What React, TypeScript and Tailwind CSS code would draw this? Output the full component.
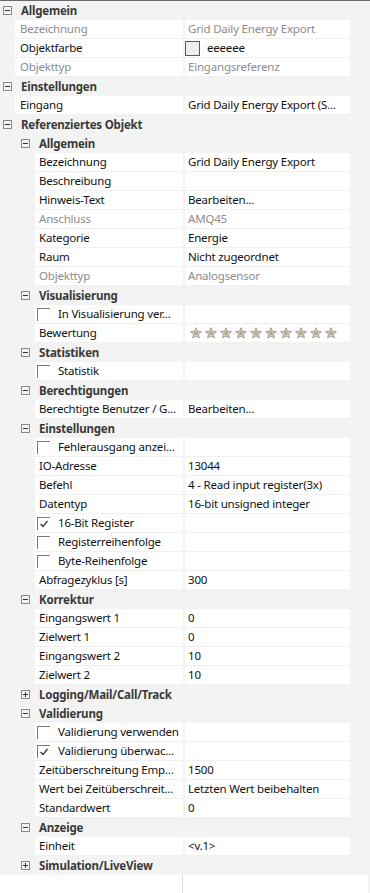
import React from "react";

type Row =
  | { t: "h"; l: 0 | 1; label: string; collapsed?: boolean }
  | { t: "p"; l: 0 | 1; label: string; value?: string; disabled?: boolean; swatch?: boolean; stars?: boolean }
  | { t: "c"; label: string; checked: boolean };

const rows: Row[] = [
  { t: "h", l: 0, label: "Allgemein" },
  { t: "p", l: 0, label: "Bezeichnung", value: "Grid Daily Energy Export", disabled: true },
  { t: "p", l: 0, label: "Objektfarbe", value: "eeeeee", swatch: true },
  { t: "p", l: 0, label: "Objekttyp", value: "Eingangsreferenz", disabled: true },
  { t: "h", l: 0, label: "Einstellungen" },
  { t: "p", l: 0, label: "Eingang", value: "Grid Daily Energy Export (S..." },
  { t: "h", l: 0, label: "Referenziertes Objekt" },
  { t: "h", l: 1, label: "Allgemein" },
  { t: "p", l: 1, label: "Bezeichnung", value: "Grid Daily Energy Export" },
  { t: "p", l: 1, label: "Beschreibung", value: "" },
  { t: "p", l: 1, label: "Hinweis-Text", value: "Bearbeiten..." },
  { t: "p", l: 1, label: "Anschluss", value: "AMQ45", disabled: true },
  { t: "p", l: 1, label: "Kategorie", value: "Energie" },
  { t: "p", l: 1, label: "Raum", value: "Nicht zugeordnet" },
  { t: "p", l: 1, label: "Objekttyp", value: "Analogsensor", disabled: true },
  { t: "h", l: 1, label: "Visualisierung" },
  { t: "c", label: "In Visualisierung ver...", checked: false },
  { t: "p", l: 1, label: "Bewertung", stars: true },
  { t: "h", l: 1, label: "Statistiken" },
  { t: "c", label: "Statistik", checked: false },
  { t: "h", l: 1, label: "Berechtigungen" },
  { t: "p", l: 1, label: "Berechtigte Benutzer / G...", value: "Bearbeiten..." },
  { t: "h", l: 1, label: "Einstellungen" },
  { t: "c", label: "Fehlerausgang anzei...", checked: false },
  { t: "p", l: 1, label: "IO-Adresse", value: "13044" },
  { t: "p", l: 1, label: "Befehl", value: "4 - Read input register(3x)" },
  { t: "p", l: 1, label: "Datentyp", value: "16-bit unsigned integer" },
  { t: "c", label: "16-Bit Register", checked: true },
  { t: "c", label: "Registerreihenfolge", checked: false },
  { t: "c", label: "Byte-Reihenfolge", checked: false },
  { t: "p", l: 1, label: "Abfragezyklus [s]", value: "300" },
  { t: "h", l: 1, label: "Korrektur" },
  { t: "p", l: 1, label: "Eingangswert 1", value: "0" },
  { t: "p", l: 1, label: "Zielwert 1", value: "0" },
  { t: "p", l: 1, label: "Eingangswert 2", value: "10" },
  { t: "p", l: 1, label: "Zielwert 2", value: "10" },
  { t: "h", l: 1, label: "Logging/Mail/Call/Track", collapsed: true },
  { t: "h", l: 1, label: "Validierung" },
  { t: "c", label: "Validierung verwenden", checked: false },
  { t: "c", label: "Validierung überwac...", checked: true },
  { t: "p", l: 1, label: "Zeitüberschreitung Emp...", value: "1500" },
  { t: "p", l: 1, label: "Wert bei Zeitüberschreit...", value: "Letzten Wert beibehalten" },
  { t: "p", l: 1, label: "Standardwert", value: "0" },
  { t: "h", l: 1, label: "Anzeige" },
  { t: "p", l: 1, label: "Einheit", value: "<v.1>" },
  { t: "h", l: 1, label: "Simulation/LiveView", collapsed: true },
];

function Toggle({ collapsed }: { collapsed?: boolean }) {
  return (
    <svg width="9" height="9" viewBox="0 0 9 9" className="shrink-0">
      <rect x="0.5" y="0.5" width="8" height="8" fill="none" stroke="#8a8a8a" />
      <line x1="2" y1="4.5" x2="7" y2="4.5" stroke="#333" />
      {collapsed && <line x1="4.5" y1="2" x2="4.5" y2="7" stroke="#333" />}
    </svg>
  );
}

function Star() {
  return (
    <svg width="12" height="12" viewBox="0 0 24 24" className="shrink-0">
      <polygon
        points="12,1.5 15,8.6 22.8,9.3 16.9,14.4 18.7,22 12,18 5.3,22 7.1,14.4 1.2,9.3 9,8.6"
        fill="#ddd8cb"
        stroke="#9a9483"
        strokeWidth="1.8"
      />
      <polygon
        points="12,7 13.6,10.6 17.4,11 14.5,13.5 15.4,17.3 12,15.2 8.6,17.3 9.5,13.5 6.6,11 10.4,10.6"
        fill="#a8a290"
      />
    </svg>
  );
}

function Check({ checked }: { checked: boolean }) {
  return (
    <div className="w-[13px] h-[13px] shrink-0 border-t border-l border-[#7a7a7a] bg-white relative">
      {checked && (
        <svg width="12" height="12" viewBox="0 0 12 12" className="absolute left-0 top-0">
          <polyline points="2.5,6 5,8.5 9.5,3" fill="none" stroke="#333" strokeWidth="1.2" />
        </svg>
      )}
    </div>
  );
}

function ValueCell({ row }: { row: Extract<Row, { t: "p" }> }) {
  return (
    <div
      className={`w-[165px] shrink-0 h-full bg-white border-b border-[#f0f0f0] flex items-center pl-[3px] overflow-hidden whitespace-nowrap ${
        row.disabled ? "text-[#8c8c8c]" : "text-[#111]"
      }`}
    >
      {row.swatch && (
        <div className="w-[15px] h-[15px] border border-[#5a5a5a] bg-[#eeeeee] shrink-0 mr-[7px] -ml-[3px]" />
      )}
      {row.stars ? (
        <div className="flex gap-[3px] pl-[2px]">
          {Array.from({ length: 10 }).map((_, i) => (
            <Star key={i} />
          ))}
        </div>
      ) : (
        row.value
      )}
    </div>
  );
}

export default function App() {
  return (
    <div
      className="w-[370px] h-[893px] bg-[#f3f3f3] border-t border-[#6b6b6b] text-[11.5px] tracking-[-0.2px] overflow-hidden flex flex-col"
      style={{ fontFamily: '"Noto Sans", "Open Sans", sans-serif' }}
    >
      {rows.map((r, i) => {
        if (r.t === "h") {
          return (
            <div
              key={i}
              className={`h-[19px] shrink-0 flex items-center font-bold text-[#3a3a3a] ${
                r.l === 0 ? "pl-[3px]" : "pl-[21px]"
              }`}
            >
              <Toggle collapsed={r.collapsed} />
              <span className="ml-[9px] whitespace-nowrap">{r.label}</span>
            </div>
          );
        }
        if (r.t === "c") {
          return (
            <div key={i} className="h-[19px] shrink-0 flex">
              <div className="w-[35px] shrink-0" />
              <div className="w-[148px] shrink-0 bg-white border-b border-[#f0f0f0] flex items-center pl-[2px] whitespace-nowrap overflow-hidden text-[#111]">
                <Check checked={r.checked} />
                <span className="ml-[8px]">{r.label}</span>
              </div>
              <div className="w-[2px] shrink-0" />
              <div className="w-[165px] shrink-0 bg-white border-b border-[#f0f0f0]" />
            </div>
          );
        }
        return (
          <div key={i} className="h-[19px] shrink-0 flex">
            <div className={`${r.l === 0 ? "w-[15px]" : "w-[35px]"} shrink-0`} />
            <div
              className={`${r.l === 0 ? "w-[168px] pl-[5px]" : "w-[148px] pl-[4px]"} shrink-0 bg-white border-b border-[#f0f0f0] flex items-center whitespace-nowrap overflow-hidden ${
                r.disabled ? "text-[#8c8c8c]" : "text-[#111]"
              }`}
            >
              {r.label}
            </div>
            <div className="w-[2px] shrink-0" />
            <ValueCell row={r} />
          </div>
        );
      })}
      <div className="flex-1 flex">
        <div className="w-[183px] bg-white border-r border-[#dcdcdc]" />
        <div className="w-[185px] bg-white" />
      </div>
    </div>
  );
}
